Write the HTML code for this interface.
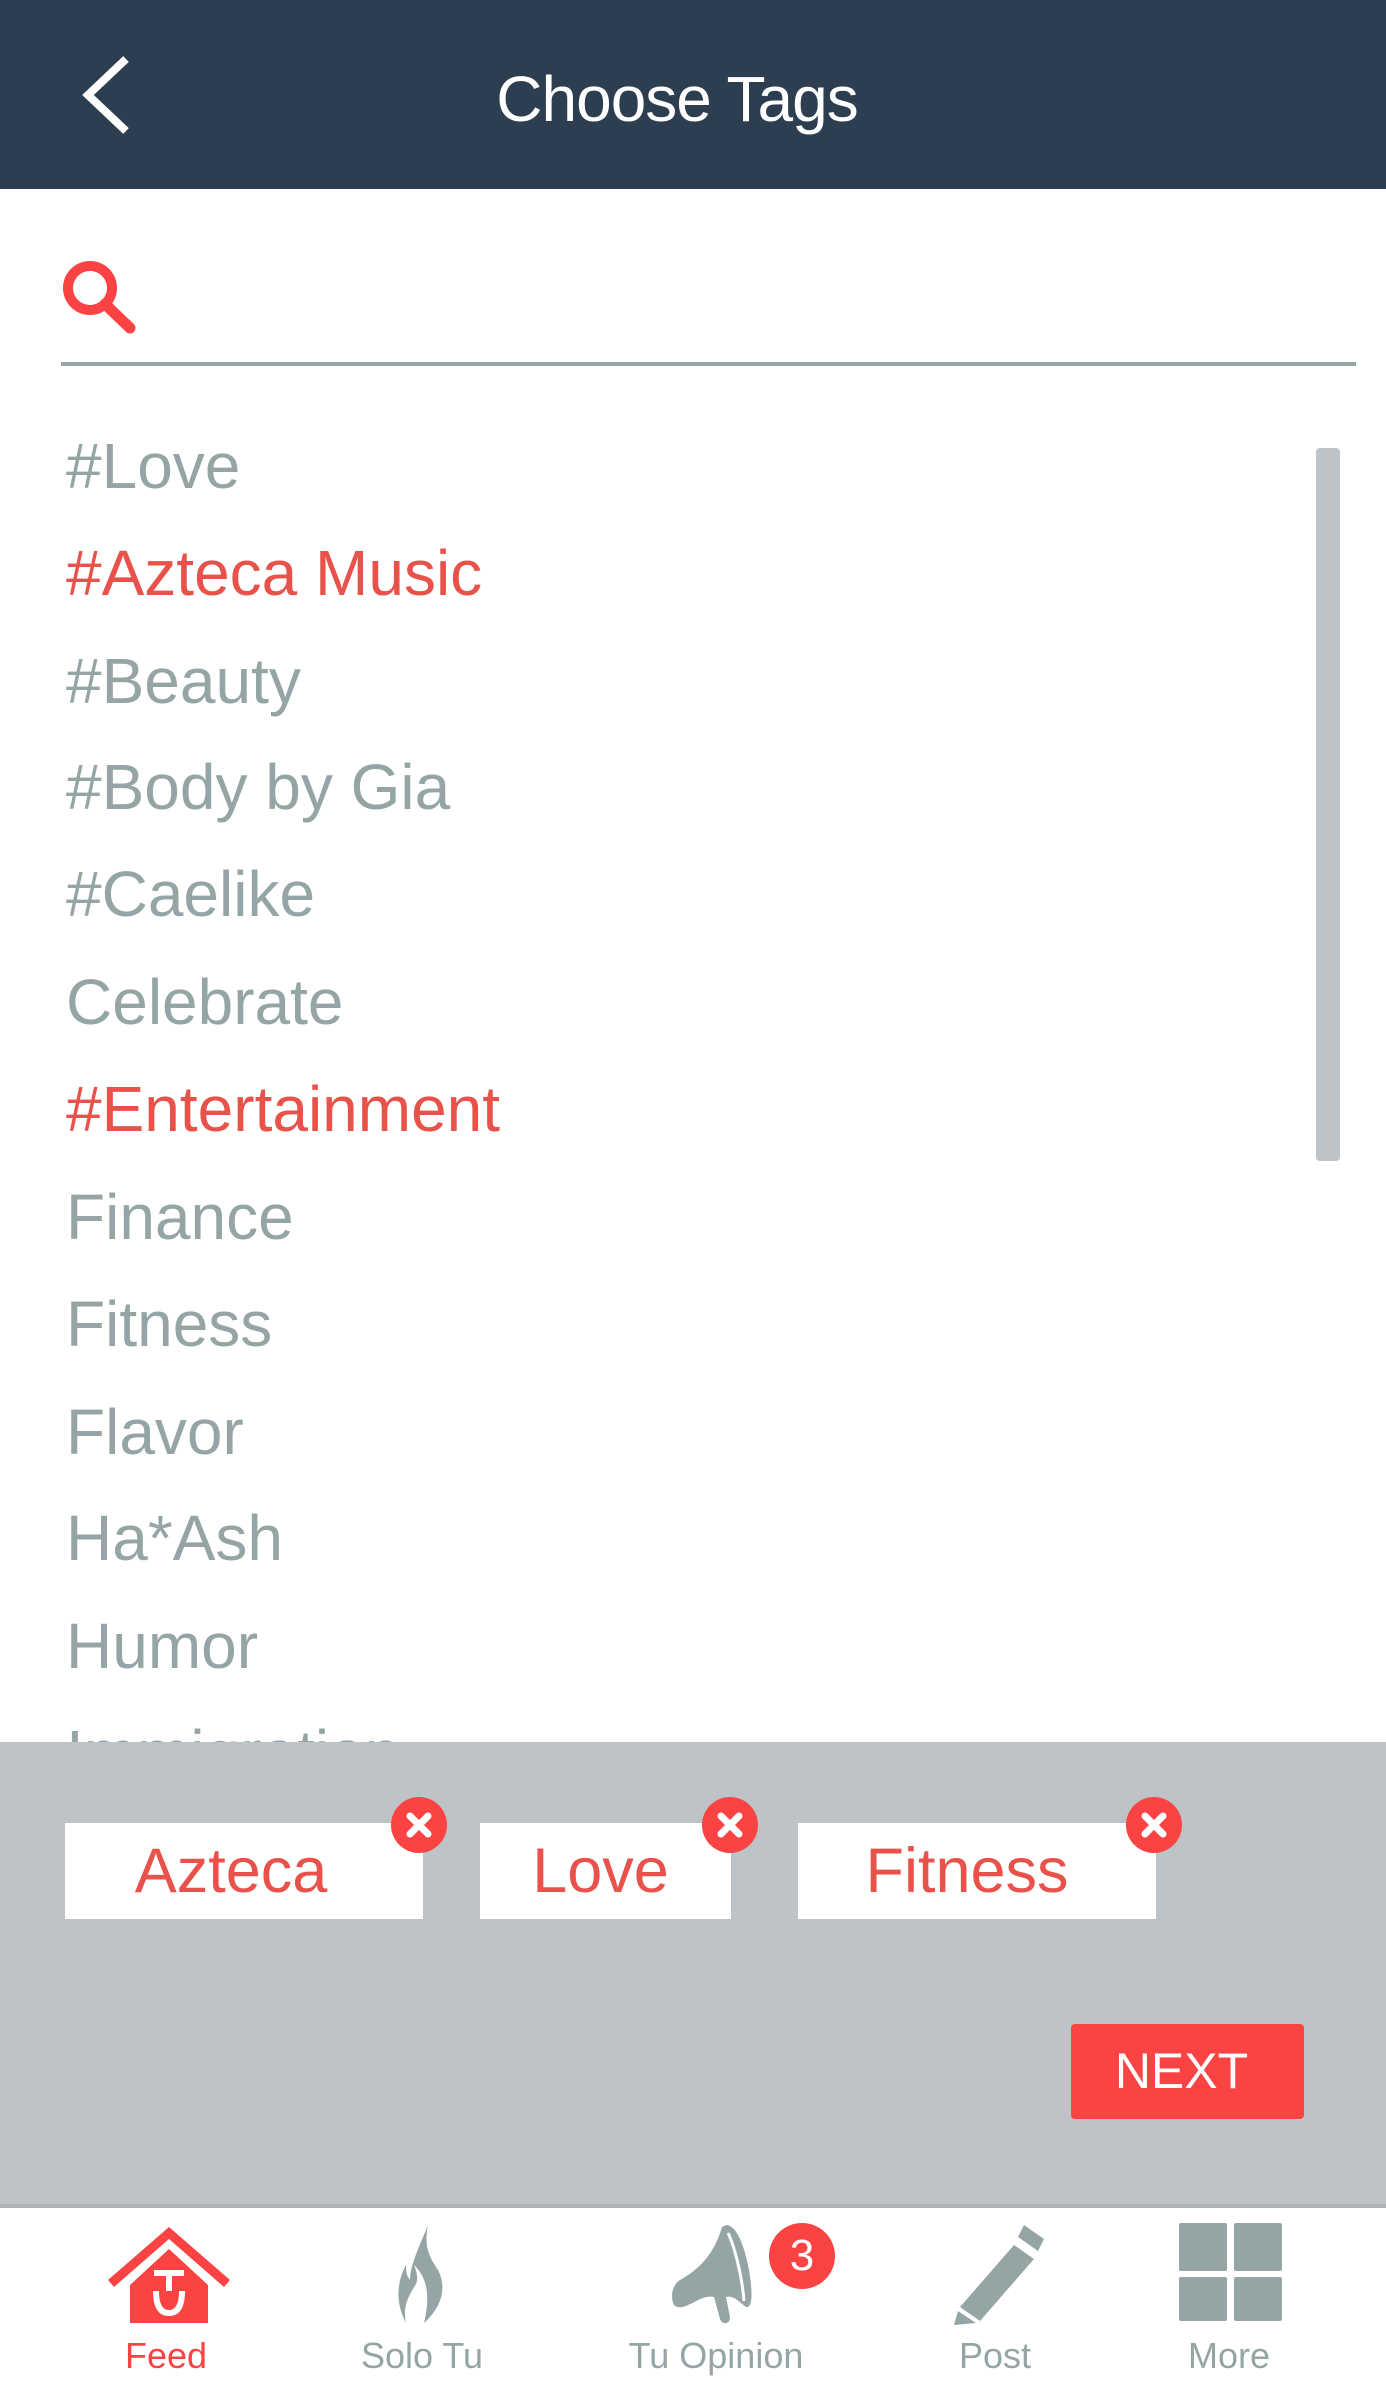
<!DOCTYPE html>
<html><head><meta charset="utf-8"><style>
*{margin:0;padding:0;box-sizing:border-box}
body{width:1386px;height:2388px;position:relative;overflow:hidden;background:#fff;font-family:"Liberation Sans",Arial,sans-serif}
.a{position:absolute}
.hdr{left:0;top:0;width:1386px;height:189px;background:#2d3e51}
.title{left:-16px;width:1386px;top:62px;text-align:center;color:#fff;font-size:64px;letter-spacing:-1px}
.item{left:66px;font-size:64px;color:#95a5a6;line-height:80px;height:80px;white-space:nowrap}
.red{color:#e9524a}
.tag{background:#fff;height:96px;top:1823px;color:#e9524a;font-size:63px;text-align:center;line-height:96px}
.x{width:56px;height:56px;border-radius:50%;background:#fc4343;top:1797px}
.lbl{top:2335px;font-size:36px;color:#95a5a6;width:240px;text-align:center}
</style></head><body>
<div class="a hdr"></div>
<svg class="a" style="left:78px;top:55px" width="56" height="80" viewBox="0 0 56 80"><path d="M48 4 L10 40 L48 76" fill="none" stroke="#fff" stroke-width="8"/></svg>
<div class="a title">Choose Tags</div>
<svg class="a" style="left:60px;top:258px" width="76" height="76" viewBox="0 0 76 76"><circle cx="30" cy="30" r="22" fill="none" stroke="#fc4343" stroke-width="10"/><path d="M45 46 L70 70" stroke="#fc4343" stroke-width="11" stroke-linecap="round"/></svg>
<div class="a" style="left:61px;top:362px;width:1295px;height:4px;background:#95a5a6"></div>
<div class="a item" style="top:426px">#Love</div>
<div class="a item red" style="top:533px">#Azteca Music</div>
<div class="a item" style="top:641px">#Beauty</div>
<div class="a item" style="top:747px">#Body by Gia</div>
<div class="a item" style="top:854px">#Caelike</div>
<div class="a item" style="top:962px">Celebrate</div>
<div class="a item red" style="top:1069px">#Entertainment</div>
<div class="a item" style="top:1177px">Finance</div>
<div class="a item" style="top:1284px">Fitness</div>
<div class="a item" style="top:1392px">Flavor</div>
<div class="a item" style="top:1498px">Ha*Ash</div>
<div class="a item" style="top:1606px">Humor</div>
<div class="a item" style="top:1713px">Immigration</div>
<div class="a" style="left:1316px;top:448px;width:24px;height:713px;background:#bdc3c7;border-radius:4px"></div>
<div class="a" style="left:0;top:1742px;width:1386px;height:464px;background:#bec3c7"></div>
<div class="a tag" style="left:65px;width:358px;padding-right:26px">Azteca</div>
<div class="a tag" style="left:480px;width:251px;padding-right:10px">Love</div>
<div class="a tag" style="left:798px;width:358px;padding-right:20px">Fitness</div>
<svg class="a x" style="left:391px" viewBox="0 0 56 56"><path d="M19 19 L37 37 M37 19 L19 37" stroke="#fff" stroke-width="7" stroke-linecap="round"/></svg>
<svg class="a x" style="left:702px" viewBox="0 0 56 56"><path d="M19 19 L37 37 M37 19 L19 37" stroke="#fff" stroke-width="7" stroke-linecap="round"/></svg>
<svg class="a x" style="left:1126px" viewBox="0 0 56 56"><path d="M19 19 L37 37 M37 19 L19 37" stroke="#fff" stroke-width="7" stroke-linecap="round"/></svg>
<div class="a" style="left:1071px;top:2024px;width:233px;height:95px;background:#fc4343;border-radius:4px;color:#fff;font-size:50px;text-align:center;line-height:95px;padding-right:12px">NEXT</div>
<div class="a" style="left:0;top:2204px;width:1386px;height:4px;background:#aeb4b8"></div>
<!-- feed -->
<svg class="a" style="left:104px;top:2225px" width="130" height="100" viewBox="0 0 130 100"><path d="M4 55 L65 2 L126 55 L120 62 L65 14 L10 62 Z" fill="#fc4343"/><path d="M26 60 L65 24 L104 60 V98 H26 Z" fill="#fc4343"/><path d="M50 48 H80 M65 48 V66 M52 66 Q52 88 65 88 Q78 88 78 66" fill="none" stroke="#fff" stroke-width="6"/></svg>
<!-- flame -->
<svg class="a" style="left:380px;top:2225px" width="84" height="100" viewBox="0 0 84 100"><path d="M48 0 C40 20 30 40 30 55 C26 50 26 45 26 40 C18 55 14 75 26 98 C22 80 30 70 34 62 C40 55 36 45 34 40 C44 50 52 65 44 98 C64 80 66 60 58 45 C48 30 44 20 48 0 Z" fill="#95a5a6"/></svg>
<!-- megaphone -->
<svg class="a" style="left:668px;top:2225px" width="100" height="100" viewBox="0 0 100 100"><path d="M54 2 C46 30 30 45 12 55 C4 60 2 72 6 80 C10 84 16 82 20 80 C30 76 36 70 46 72 L52 94 C54 100 62 100 62 92 L58 72 C66 70 72 78 78 82 C86 84 84 60 80 40 C74 12 66 0 58 0 Z" fill="#95a5a6"/><path d="M60 8 C66 20 74 50 76 76" stroke="#fff" stroke-width="3" fill="none"/></svg>
<div class="a" style="left:769px;top:2223px;width:66px;height:66px;border-radius:50%;background:#fc4343;color:#fff;font-size:44px;text-align:center;line-height:66px">3</div>
<!-- pencil -->
<svg class="a" style="left:948px;top:2225px" width="100" height="100" viewBox="0 0 100 100"><path d="M76 0 L96 14 L90 26 L70 12 Z" fill="#95a5a6"/><path d="M66 20 L86 34 L32 96 L12 82 Z" fill="#95a5a6"/><path d="M10 86 L28 98 L6 100 Z" fill="#95a5a6"/></svg>
<!-- grid -->
<div class="a" style="left:1179px;top:2223px;width:48px;height:48px;background:#95a5a6;border-radius:2px"></div>
<div class="a" style="left:1234px;top:2223px;width:48px;height:48px;background:#95a5a6;border-radius:2px"></div>
<div class="a" style="left:1179px;top:2277px;width:48px;height:44px;background:#95a5a6;border-radius:2px"></div>
<div class="a" style="left:1234px;top:2277px;width:48px;height:44px;background:#95a5a6;border-radius:2px"></div>
<div class="a lbl" style="left:46px;color:#fc4343">Feed</div>
<div class="a lbl" style="left:302px">Solo Tu</div>
<div class="a lbl" style="left:596px">Tu Opinion</div>
<div class="a lbl" style="left:875px">Post</div>
<div class="a lbl" style="left:1109px">More</div>
</body></html>
